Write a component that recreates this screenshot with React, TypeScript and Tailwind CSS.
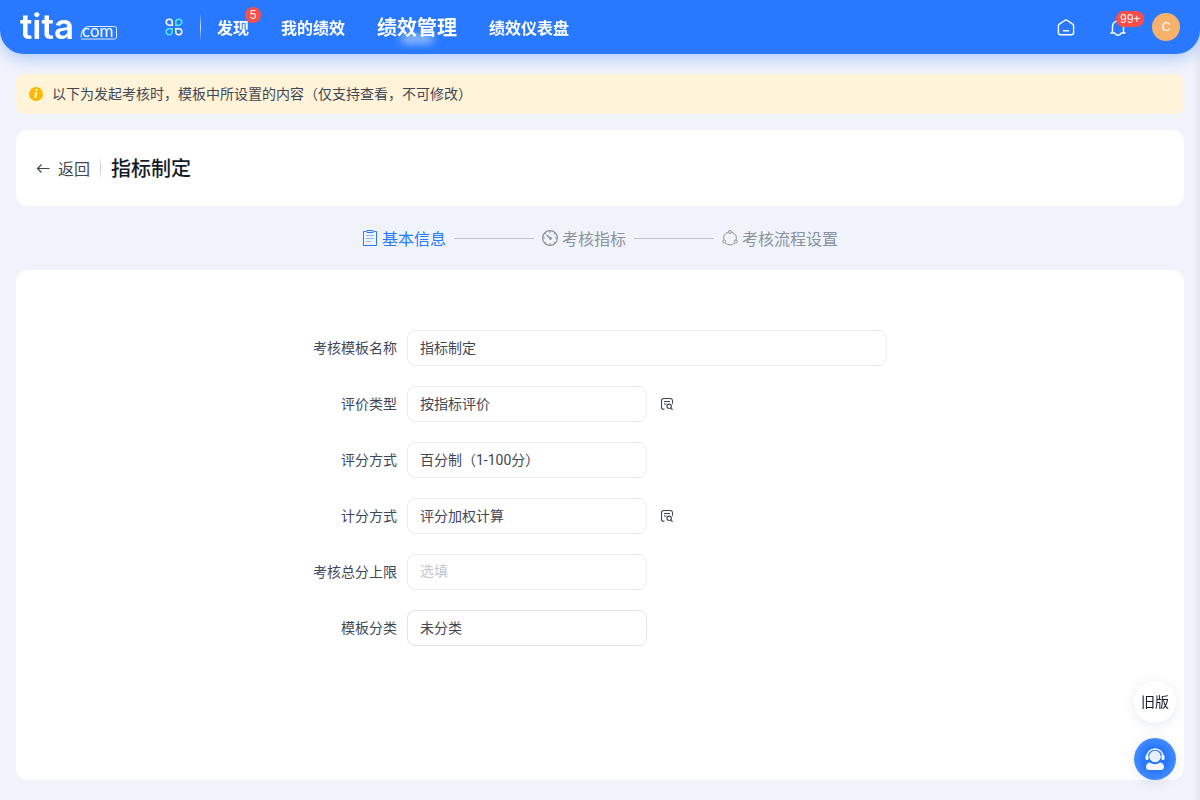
import React from "react";

const navItems = [
  { label: "发现", badge: "5" },
  { label: "我的绩效" },
  { label: "绩效管理", active: true },
  { label: "绩效仪表盘" },
];

const fields = [
  { id: "name", label: "考核模板名称", value: "指标制定", wide: true },
  { id: "evaluate-type", label: "评价类型", value: "按指标评价", preview: true },
  { id: "score-mode", label: "评分方式", value: "百分制（1-100分）" },
  { id: "calc-mode", label: "计分方式", value: "评分加权计算", preview: true },
  { id: "score-limit", label: "考核总分上限", value: "", placeholder: "选填" },
  { id: "category", label: "模板分类", value: "未分类", strong: true },
];

const Logo = () => (
  <svg width="98" height="54" viewBox="0 0 98 54" fill="none" role="img" aria-label="tita.com">
    <text
      x="0"
      y="39"
      fill="#fff"
      className="font-['Inter',sans-serif] text-[35px] font-semibold"
    >
      tita
    </text>
    <path
      d="M61 37.5C61 31 64 26.5 69 26.5H94.500a2 2 0 0 1 2 2V37a2 2 0 0 1-2 2H61"
      stroke="#fff"
      strokeOpacity="0.85"
    />
    <text x="62" y="37" fill="#fff" className="font-['Lato',sans-serif] text-[17px]">
      com
    </text>
  </svg>
);

const AppsIcon = () => (
  <svg width="18" height="18" viewBox="0 0 18 18" fill="none" strokeWidth="1.5">
    <path d="M4.2 1.2a3 3 0 0 1 3 3v3h-3a3 3 0 0 1 0-6Z" stroke="#fff" />
    <path d="M13.8 1.2a3 3 0 0 0-3 3v3h3a3 3 0 0 0 0-6Z" stroke="#4ce8f5" />
    <path d="M4.2 16.8a3 3 0 0 0 3-3v-3h-3a3 3 0 0 0 0 6Z" stroke="#4ce8f5" />
    <path d="M13.8 16.8a3 3 0 0 1-3-3v-3h3a3 3 0 0 1 0 6Z" stroke="#fff" />
  </svg>
);

const HomeIcon = () => (
  <svg width="18" height="18" viewBox="0 0 18 18" fill="none" stroke="#fff" strokeWidth="1.4">
    <path
      d="M7.700 2.500 2.300 6.100c-.6.4-.9.9-.9 1.600v6.900c0 1.300.9 2.200 2.200 2.200h10.800c1.300 0 2.200-.9 2.200-2.200V7.700c0-.7-.3-1.200-.9-1.600l-5.400-3.600a2.400 2.400 0 0 0-2.600 0Z"
      strokeLinejoin="round"
    />
    <path d="M6.500 12.800h5" strokeLinecap="round" />
  </svg>
);

const BellIcon = () => (
  <svg width="18" height="18" viewBox="0 0 18 18" fill="none" stroke="#fff" strokeWidth="1.4">
    <path
      d="M3.500 13.800V8.500a5.500 5.500 0 0 1 11 0v5.300M2 15h3.800c.6 1.500 1.700 2.200 3.200 2.200s2.600-.7 3.200-2.200H16M3.500 13.600 2.300 15M14.500 13.600 15.700 15"
      strokeLinecap="round"
      strokeLinejoin="round"
    />
  </svg>
);

const FormIcon = () => (
  <svg width="16" height="18" viewBox="0 0 16 18" fill="none">
    <path d="M4 2.500H1.500v14h13v-14H12" stroke="#2879ff" strokeLinejoin="round" />
    <path d="M5 1.500h6v2H5z" stroke="#2879ff" strokeLinejoin="round" />
    <path d="M4 6.500h8M4 9.500h8M4 12.500h5" stroke="#2879ff" strokeOpacity="0.5" />
  </svg>
);

const GaugeIcon = () => (
  <svg width="16" height="16" viewBox="1 1 16 16" fill="none" stroke="#89919f">
    <circle cx="9" cy="9" r="7.400" strokeWidth="1.200" />
    <path d="M9 2v2M9 14v2M2 9h2M14 9h2M4 4l1.200 1.200M14 4l-1.200 1.200M4 14l1.200-1.200M14 14l-1.200-1.200" />
    <path d="M6 6.200 9 9" strokeWidth="1.500" strokeLinecap="round" />
    <circle cx="9.500" cy="9.500" r="1" fill="#89919f" />
  </svg>
);

const FlowIcon = () => (
  <svg width="16" height="16" viewBox="0 0 16 16" fill="none" stroke="#89919f">
    <path d="M6 2.400A6.400 6.400 0 0 0 1.800 9.600M10 2.400a6.400 6.400 0 0 1 4.200 7.200M3.400 13a6.400 6.400 0 0 0 9.200 0" />
    <circle cx="8" cy="2" r="1.500" />
    <circle cx="2.200" cy="11.500" r="1.500" />
    <circle cx="13.800" cy="11.500" r="1.500" />
  </svg>
);

const PreviewIcon = () => (
  <svg width="14" height="14" viewBox="0 0 14 14" fill="none" stroke="#3f4755" strokeWidth="1.100">
    <path d="M4.500 12.300H3.800a2.300 2.300 0 0 1-2.300-2.300V3.800a2.300 2.300 0 0 1 2.300-2.300h6.400a2.300 2.300 0 0 1 2.300 2.300v3" />
    <path d="M4 4.500h6M4 7h2.500" />
    <circle cx="9.200" cy="9.300" r="2.200" />
    <path d="m11 11 .8 1.300h1.200" />
  </svg>
);

const ServiceIcon = () => (
  <svg width="24" height="26" viewBox="0 0 24 26" fill="none">
    <path d="M4 11a8 8 0 0 1 16 0" stroke="#fff" strokeWidth="1.400" />
    <rect x="2.500" y="9" width="3" height="5" rx="1.500" fill="#fff" />
    <rect x="18.500" y="9" width="3" height="5" rx="1.500" fill="#fff" />
    <circle cx="12" cy="10.500" r="5.200" fill="#e6f0ff" stroke="#fff" />
    <path
      d="M7 16.500c1.500 1.200 3 1.700 5 1.700s3.500-.5 5-1.700c2.500.5 4 2 4 4.200 0 2.300-1.200 3.300-3.200 3.300H6.200C4.200 24 3 23 3 20.700c0-2.200 1.500-3.700 4-4.200Z"
      fill="#f2f7ff"
    />
  </svg>
);

const Header = () => (
  <header className="relative z-10 flex h-[54px] items-center rounded-b-3xl bg-[#2879ff] px-5 text-white shadow-[0_4px_16px_rgba(40,121,255,0.35)]">
    <a href="#" className="mr-[47px]">
      <Logo />
    </a>
    <button aria-label="应用" className="mr-[17px]">
      <AppsIcon />
    </button>
    <span className="mr-4 h-7 w-px bg-linear-to-b from-white/0 via-white/80 to-white/0" />
    <nav className="flex items-center gap-8">
      {navItems.map((item) => (
        <a
          key={item.label}
          href="#"
          className={`relative font-bold whitespace-nowrap ${item.active ? "text-xl" : "text-base"}`}
        >
          {item.active && (
            <span className="absolute -bottom-0.5 left-1/2 h-2 w-8 -translate-x-1/2 rounded-full bg-white/60 blur-xs" />
          )}
          <span className="relative">{item.label}</span>
          {item.badge && (
            <span className="absolute -top-2 -right-3 flex size-4 items-center justify-center rounded-full bg-[#ff4d4a] font-['Liberation_Sans'] text-xs font-normal">
              {item.badge}
            </span>
          )}
        </a>
      ))}
    </nav>
    <div className="ml-auto flex items-center">
      <button aria-label="首页" className="mr-[34px]">
        <HomeIcon />
      </button>
      <button aria-label="通知" className="relative mr-[25px]">
        <BellIcon />
        <span className="absolute -top-[7px] left-[7px] flex h-4 items-center rounded-full bg-[#ff4d4a] px-1 font-['Liberation_Sans'] text-xs">
          99+
        </span>
      </button>
      <button className="size-7 rounded-full bg-[#f6b26b] font-['Liberation_Sans'] text-xs">C</button>
    </div>
  </header>
);

const Steps = () => (
  <ol className="flex h-16 items-center justify-center gap-2 text-base text-[#89919f]">
    <li className="flex items-center gap-1 text-[#2879ff]" aria-current="step">
      <FormIcon />
      基本信息
    </li>
    <li className="h-px w-20 bg-[#bfc7d5]" aria-hidden="true" />
    <li className="flex items-center gap-1">
      <GaugeIcon />
      考核指标
    </li>
    <li className="h-px w-20 bg-[#bfc7d5]" aria-hidden="true" />
    <li className="flex items-center gap-1">
      <FlowIcon />
      考核流程设置
    </li>
  </ol>
);

const TemplateForm = () => (
  <form className="mx-auto flex w-[574px] max-w-full flex-col gap-5 font-['Roboto','Noto_Sans_CJK_SC',sans-serif]">
    {fields.map((field) => (
      <div key={field.id} className="flex items-center">
        <label htmlFor={field.id} className="mr-2.5 w-[84px] shrink-0 text-right whitespace-nowrap">
          {field.label}
        </label>
        <input
          id={field.id}
          type="text"
          readOnly
          defaultValue={field.value}
          placeholder={field.placeholder}
          className={`h-9 min-w-0 rounded-lg border bg-white px-3 pb-0.5 outline-none placeholder:text-[#bfc7d5] ${
            field.wide ? "flex-1" : "w-60"
          } ${field.strong ? "border-[#dfe3ea]" : "border-[#e9ecf0]"}`}
        />
        {field.preview && (
          <button type="button" aria-label="查看说明" className="ml-[13px]">
            <PreviewIcon />
          </button>
        )}
      </div>
    ))}
  </form>
);

const App = () => {
  return (
    <div className="flex min-h-screen flex-col bg-[#f0f3fa] font-['Noto_Sans_CJK_SC',sans-serif] text-sm text-[#3f4755]">
      <Header />
      <main className="flex flex-1 flex-col px-4 py-5">
        <div className="flex h-10 items-center rounded-lg bg-[#fff3d9] px-3 font-['Roboto','Noto_Sans_CJK_SC',sans-serif]">
          <span className="mr-[9px] ml-px flex size-[14px] items-center justify-center rounded-full bg-[#ffb800] font-['Liberation_Serif'] text-xs font-bold text-white italic">
            i
          </span>
          以下为发起考核时，模板中所设置的内容（仅支持查看，不可修改）
        </div>

        <div className="mt-4 flex h-[76px] items-center rounded-xl bg-white px-5">
          <button className="flex items-center gap-2 text-base">
            <svg width="14" height="14" viewBox="0 0 14 14" fill="none" stroke="#3f4755" strokeWidth="1.200">
              <path d="M13.500 7.500H1.500M5.500 3.500 1.500 7.500l4 4" />
            </svg>
            返回
          </button>
          <span className="mx-2.5 h-6 w-px bg-linear-to-b from-[#bfc7d5]/0 via-[#bfc7d5] to-[#bfc7d5]/0" />
          <h1 className="text-xl font-medium text-[#141c28]">指标制定</h1>
        </div>

        <Steps />

        <section className="flex-1 rounded-xl bg-white pt-[60px] pb-16">
          <TemplateForm />
        </section>
      </main>

      {/* Soft shade along the right edge */}
      <div className="pointer-events-none fixed inset-y-0 right-0 w-2 bg-linear-to-r from-black/0 to-black/5" />

      {/* Floating actions */}
      <div className="fixed right-6 bottom-5 flex flex-col gap-[15px] font-['Roboto','Noto_Sans_CJK_SC',sans-serif]">
        <button className="size-[42px] rounded-full bg-white text-sm text-[#141c28] shadow-[0_2px_12px_rgba(127,145,180,0.2)]">
          旧版
        </button>
        <button
          aria-label="在线客服"
          className="flex size-[42px] items-center justify-center rounded-full bg-radial from-[#2879ff] from-40% to-[#5c9aff] shadow-[0_2px_12px_rgba(127,145,180,0.2)]"
        >
          <ServiceIcon />
        </button>
      </div>
    </div>
  );
};

export default App;
